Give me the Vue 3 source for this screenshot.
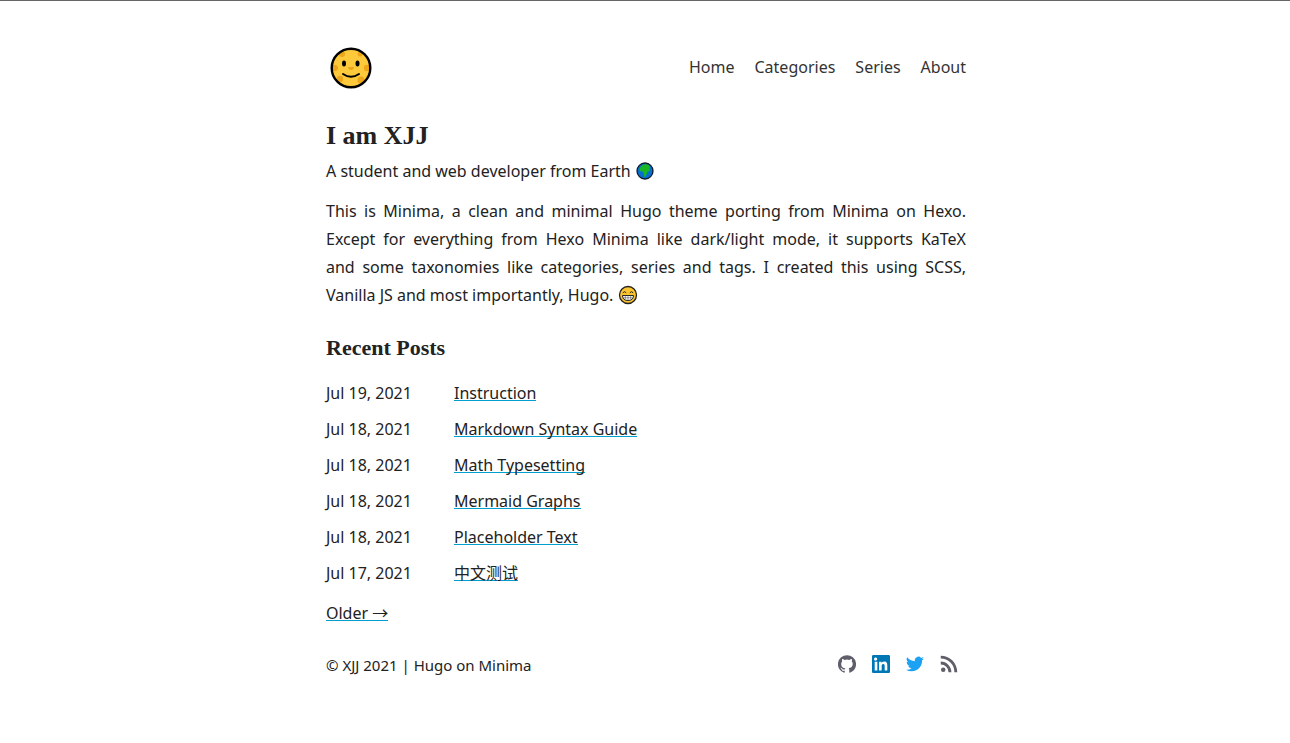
<script setup>
const nav = ['Home', 'Categories', 'Series', 'About']
const posts = [
  { date: 'Jul 19, 2021', iso: '2021-07-19', title: 'Instruction' },
  { date: 'Jul 18, 2021', iso: '2021-07-18', title: 'Markdown Syntax Guide' },
  { date: 'Jul 18, 2021', iso: '2021-07-18', title: 'Math Typesetting' },
  { date: 'Jul 18, 2021', iso: '2021-07-18', title: 'Mermaid Graphs' },
  { date: 'Jul 18, 2021', iso: '2021-07-18', title: 'Placeholder Text' },
  { date: 'Jul 17, 2021', iso: '2021-07-17', title: '中文测试' },
]
</script>

<template>
  <div class="page">
    <div class="container">
      <header class="header">
        <a class="logo" href="#" aria-label="Home page">
          <svg viewBox="0 0 42 42" width="42" height="42">
            <defs><clipPath id="moon"><circle cx="21" cy="21" r="18.5" /></clipPath></defs>
            <circle cx="21" cy="21" r="19" fill="#ffc93c" />
            <g clip-path="url(#moon)" fill="#eda51a">
              <circle cx="12" cy="7" r="3" />
              <circle cx="30" cy="7" r="2.5" />
              <circle cx="5" cy="21" r="3" />
              <circle cx="37" cy="21" r="3.2" />
              <circle cx="10" cy="32" r="3.2" />
              <circle cx="31" cy="33" r="3.5" />
              <path d="M18 20h6a3 3 0 0 1-6 0z" />
            </g>
            <circle cx="21" cy="21" r="19.3" fill="none" stroke="#000" stroke-width="2.4" />
            <ellipse cx="14" cy="16.5" rx="2" ry="3" />
            <ellipse cx="27.5" cy="16.5" rx="2" ry="3" />
            <path d="M13 27q8 5.500 16 0" fill="none" stroke="#000" stroke-width="2" stroke-linecap="round" />
          </svg>
        </a>
        <nav class="nav">
          <a v-for="item in nav" :key="item" href="#">{{ item }}</a>
        </nav>
      </header>

      <main>
        <h1>I am XJJ</h1>
        <p class="tagline">
          A student and web developer from Earth
          <svg class="emoji" viewBox="0 0 20 20" role="img" aria-label="Earth">
            <circle cx="10" cy="10" r="8" fill="#0a6ed1" />
            <path d="M5 6.500 7.500 4l3.500-1 3.500 1.500.5 2.500-1 1 1 .5-.5 1.500-2 1-1 2.500-1.300 2.500-1.200-.5-.2-3.500-1.300-1.500-2.200-.3-.8-1.500z" fill="#18b526" />
            <circle cx="10" cy="10" r="8" fill="none" stroke="#111c2c" stroke-width="1.3" />
          </svg>
        </p>
        <p class="bio">
          This is Minima, a clean and minimal Hugo theme porting from Minima on Hexo. Except for everything from Hexo
          Minima like dark/light mode, it supports KaTeX and&nbsp;some taxonomies like categories, series and tags. I
          created this using SCSS, Vanilla&nbsp;JS and most importantly, Hugo.
          <svg class="emoji" viewBox="0 0 20 20" role="img" aria-label="Grinning face">
            <circle cx="10" cy="10" r="8.500" fill="#fcc52f" stroke="#222" stroke-width="1.3" />
            <path d="M4.800 7.800q1.700-2.200 3.400 0M11.800 7.800q1.700-2.200 3.400 0" fill="none" stroke="#222" />
            <path d="M4.500 10.500h11q0 5-5.500 5t-5.500-5z" fill="#fff" stroke="#222" />
            <path d="M5 12.800h10M7.300 10.500v4M10 10.500v5M12.700 10.500v4" stroke="#555" stroke-width=".6" />
          </svg>
        </p>

        <h2>Recent Posts</h2>
        <ul class="posts">
          <li v-for="post in posts" :key="post.title">
            <time :datetime="post.iso">{{ post.date }}</time>
            <span><a class="link" href="#">{{ post.title }}</a></span>
          </li>
        </ul>
        <p class="older"><a class="link" href="#">Older →</a></p>
      </main>

      <footer class="footer">
        <span>© XJJ 2021 | Hugo on Minima</span>
        <div class="social">
          <a href="#" aria-label="GitHub">
            <svg viewBox="0 0 24 24" fill="#5f5f6b"><path d="M12 .3a12 12 0 0 0-3.800 23.400c.6.1.8-.3.8-.6v-2c-3.300.7-4-1.600-4-1.600-.6-1.400-1.400-1.800-1.400-1.800-1-.7.1-.7.1-.7 1.200 0 1.900 1.200 1.900 1.200 1 1.800 2.800 1.300 3.500 1 0-.8.4-1.300.7-1.600-2.700-.3-5.500-1.300-5.500-6 0-1.200.5-2.300 1.300-3.100-.2-.4-.6-1.600 0-3.200 0 0 1-.3 3.400 1.200a11.500 11.500 0 0 1 6 0c2.300-1.500 3.300-1.200 3.300-1.200.6 1.600.2 2.800 0 3.200.9.8 1.300 1.900 1.300 3.200 0 4.600-2.800 5.600-5.500 5.900.5.4.9 1 .9 2.200v3.300c0 .3.1.7.8.6A12 12 0 0 0 12 .3" /></svg>
          </a>
          <a href="#" aria-label="LinkedIn">
            <svg viewBox="0 0 24 24" fill="#0077b5"><path d="M20.400 20.500h-3.500v-5.600c0-1.300 0-3-1.900-3s-2.100 1.400-2.100 2.900v5.700H9.400V9h3.400v1.600c.5-.9 1.600-1.900 3.400-1.900 3.600 0 4.200 2.400 4.200 5.500v6.300zM5.300 7.400a2.100 2.100 0 1 1 0-4.100 2.100 2.100 0 0 1 0 4.100zm1.800 13.100H3.600V9h3.500v11.500zM22.200 0H1.800C.8 0 0 .8 0 1.700v20.500c0 1 .8 1.800 1.800 1.800h20.400c1 0 1.800-.8 1.800-1.800V1.700C24 .8 23.200 0 22.200 0z" /></svg>
          </a>
          <a href="#" aria-label="Twitter">
            <svg viewBox="0 0 24 24" fill="#1da1f2"><path d="M24 4.600a10 10 0 0 1-2.800.8 5 5 0 0 0 2.100-2.700c-1 .6-2 1-3.100 1.200a4.900 4.900 0 0 0-8.400 4.500A14 14 0 0 1 1.700 3.100a4.900 4.900 0 0 0 1.500 6.600 4.900 4.900 0 0 1-2.200-.6v.1a4.900 4.900 0 0 0 3.900 4.800 5 5 0 0 1-2.200.1 4.900 4.900 0 0 0 4.600 3.400A9.900 9.900 0 0 1 0 19.500a14 14 0 0 0 7.500 2.200c9.100 0 14-7.500 14-14v-.6A10 10 0 0 0 24 4.600z" /></svg>
          </a>
          <a href="#" aria-label="RSS">
            <svg viewBox="0 0 24 24" fill="#5f5f6b"><circle cx="4.300" cy="19.700" r="3" /><path d="M1 1v3.800A18.200 18.200 0 0 1 19.200 23H23A22 22 0 0 0 1 1zm0 7.800v3.800A10.400 10.400 0 0 1 11.400 23h3.800A14.200 14.200 0 0 0 1 8.800z" /></svg>
          </a>
        </div>
      </footer>
    </div>
  </div>
</template>

<style>
body {
  margin: 0;
  background: #fff;
}
</style>

<style scoped>
.page {
  padding-left: 2px;
  border-top: 1px solid #666;
  color: #222;
  font: 16px/28px "Noto Sans", "Noto Sans CJK SC", sans-serif;
}
.container {
  max-width: 640px;
  margin: 0 auto;
  padding: 32px 24px;
}
.header {
  display: flex;
  align-items: center;
  justify-content: space-between;
  height: 68px;
}
.logo {
  display: flex;
  padding: 2px 0 0 4px;
}
.nav {
  display: flex;
  gap: 20px;
}
.nav a {
  color: #333;
  text-decoration: none;
}
h1,
h2 {
  margin: 0;
  font-family: "Liberation Serif", serif;
  font-weight: 700;
}
h1 {
  margin: 16px 0 2px;
  font-size: 26px;
  line-height: 38px;
}
h2 {
  margin-top: 24px;
  font-size: 22px;
  line-height: 30px;
}
p {
  margin: 0;
}
.bio {
  margin-top: 12px;
  text-align: justify;
}
.emoji {
  width: 20px;
  height: 20px;
  vertical-align: -4px;
}
.posts {
  margin: 12px 0 0;
  padding: 0;
  list-style: none;
}
.posts li {
  display: flex;
  padding: 4px 0;
}
time {
  width: 128px;
}
.link {
  color: #222;
  text-decoration: none;
  background: linear-gradient(#009fcf, #009fcf) 0 calc(100% - 3px) / 100% 1px no-repeat;
}
.older {
  margin-top: 8px;
}
.footer {
  display: flex;
  align-items: center;
  justify-content: space-between;
  margin-top: 24px;
  font-size: 15px;
}
.social {
  display: flex;
  gap: 16px;
  padding: 0 8px 2px 0;
}
.social a {
  display: flex;
}
.social svg {
  width: 18px;
  height: 18px;
}
</style>
